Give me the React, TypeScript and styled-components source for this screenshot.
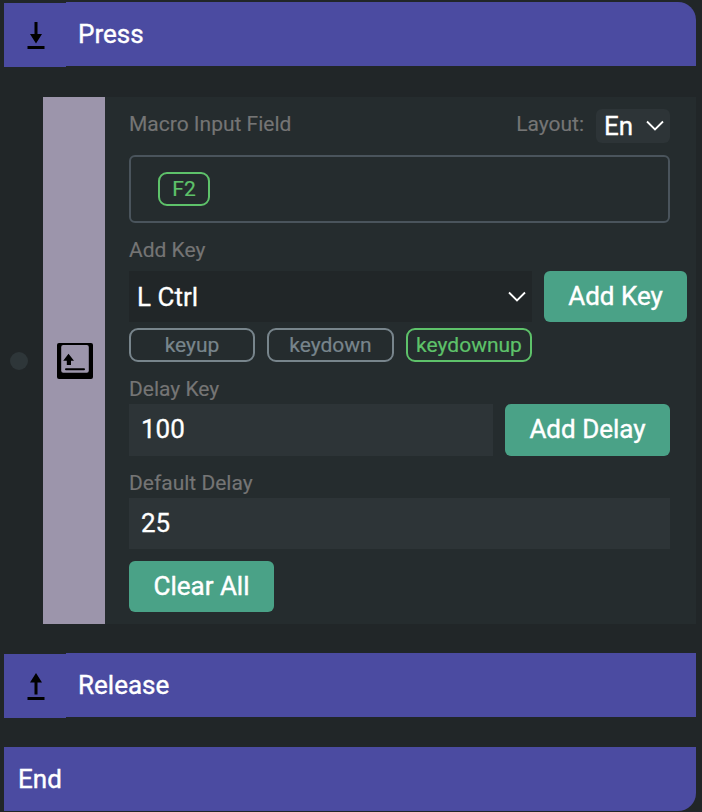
import React from 'react';
import styled, { createGlobalStyle } from 'styled-components';

const GlobalStyle = createGlobalStyle`
  *, *::before, *::after { box-sizing: border-box; }
  html, body { margin: 0; background: #212628; }
  body {
    font-family: Roboto, sans-serif;
    color: #fff;
    overflow: hidden;
  }
`;

const Page = styled.main`
  display: flex;
  flex-direction: column;
  height: 812px;
  padding: 2px 6px 1px 4px;
`;

const Section = styled.header`
  display: flex;
  height: 65px;
`;

const SectionIcon = styled.div`
  display: flex;
  align-items: center;
  justify-content: center;
  width: 62px;
  height: 64px;
  margin-top: 1px;
  padding-left: 2px;
  background: #4b4ba1;
`;

const SectionTitle = styled.h2<{ $pad: number; $radius?: string }>`
  flex: 1;
  height: 64px;
  margin: 0;
  padding-left: ${p => p.$pad}px;
  border-radius: ${p => p.$radius ?? '0'};
  background: #4b4ba1;
  font-size: 26px;
  font-weight: 400;
  -webkit-text-stroke: 0.4px #fff;
  line-height: 64px;
`;

const EndSection = styled(Section)`
  height: 64px;
  margin-top: 29px;
`;

const Action = styled.section`
  display: flex;
  height: 527px;
  margin: 30px 0 29px;
`;

const Connector = styled.div`
  display: flex;
  align-items: center;
  width: 39px;
  padding-left: 6px;
`;

const Dot = styled.span`
  width: 18px;
  height: 18px;
  border-radius: 50%;
  background: #2e3639;
`;

const Handle = styled.div`
  display: flex;
  align-items: center;
  justify-content: center;
  width: 62px;
  padding-left: 2px;
  background: #9c95ab;
`;

const Panel = styled.div`
  flex: 1;
  min-width: 0;
  padding: 12px 26px 12px 24px;
  background: #252c2e;
`;

const Top = styled.div`
  display: flex;
  align-items: flex-start;
  height: 34px;
  margin-bottom: 12px;
`;

const Label = styled.label<{ $height: number; $drop?: number }>`
  display: block;
  height: ${p => p.$height}px;
  padding-top: ${p => p.$drop ?? 0}px;
  color: #757575;
  font-size: 21px;
  line-height: ${p => p.$height - (p.$drop ?? 0)}px;
  -webkit-text-stroke: 0.15px currentColor;
  white-space: nowrap;
`;

const LayoutLabel = styled(Label)`
  margin: 0 12px 0 auto;
`;

const Select = styled.button<{ $compact?: boolean }>`
  display: flex;
  flex: ${p => (p.$compact ? '0 0 74px' : '0 0 403px')};
  align-items: center;
  justify-content: space-between;
  height: ${p => (p.$compact ? 34 : 51)}px;
  padding: 0 6px 0 8px;
  border: 0;
  border-radius: ${p => (p.$compact ? 6 : 0)}px;
  background: ${p => (p.$compact ? '#2d3437' : '#212628')};
  color: #fff;
  font: 400 26px Roboto, sans-serif;
  -webkit-text-stroke: 0.3px #fff;
`;

const MacroField = styled.div`
  display: flex;
  align-items: center;
  height: 68px;
  padding-left: 27px;
  border: 2px solid #4a545c;
  border-radius: 6px;
`;

const Chip = styled.button<{ $active?: boolean; $width: number }>`
  width: ${p => p.$width}px;
  height: 34px;
  padding: 0;
  border: 2px solid ${p => (p.$active ? '#5ec26a' : '#78858c')};
  border-radius: 9px;
  background: transparent;
  color: ${p => (p.$active ? '#5ec26a' : '#78858c')};
  font: 400 21px/30px Roboto, sans-serif;
  -webkit-text-stroke: 0.2px currentColor;
`;

const Row = styled.div`
  display: flex;
  gap: 12px;
`;

const ChipRow = styled(Row)`
  margin-top: 6px;
`;

const Input = styled.input<{ $height: number }>`
  flex: 1;
  width: 100%;
  min-width: 0;
  height: ${p => p.$height}px;
  padding: 0 12px 2px;
  border: 0;
  border-radius: 0;
  outline: 0;
  background: #2d3437;
  color: #fff;
  font: 400 26px Roboto, sans-serif;
  -webkit-text-stroke: 0.3px #fff;
`;

const Button = styled.button<{ $width: number; $height: number }>`
  flex: 0 0 ${p => p.$width}px;
  width: ${p => p.$width}px;
  height: ${p => p.$height}px;
  padding: 0 0 ${p => p.$height - 50}px;
  border: 0;
  border-radius: 6px;
  background: #4aa287;
  color: #fff;
  font: 400 26px Roboto, sans-serif;
  -webkit-text-stroke: 0.4px #fff;
`;

const ClearRow = styled(Row)`
  margin-top: 12px;
`;

const Chevron = () => (
  <svg width="18" height="12" viewBox="0 0 18 12" fill="none" stroke="#fff" strokeWidth="1.8">
    <path d="M1 1.5 9 9.5 17 1.5" />
  </svg>
);

const PressIcon = () => (
  <svg width="18" height="28" viewBox="0 0 18 28">
    <path d="M7.5 1h3v12H15L9 22.5 3 13h4.5zM0.5 25h17v3h-17z" />
  </svg>
);

const ReleaseIcon = () => (
  <svg width="18" height="28" viewBox="0 0 18 28">
    <path d="M9 1 15 10.5h-4.5v12h-3v-12H3zM0.5 25h17v3h-17z" />
  </svg>
);

const KeyIcon = () => (
  <svg width="36" height="36" viewBox="0 0 36 36">
    <rect width="36" height="36" rx="2" />
    <rect x="4.2" y="2" width="27.6" height="27.8" rx="2" fill="#9c95ab" />
    <path d="M11.5 10.7 17 17.8h-3V22H9.8v-4.2H6.2z" />
    <path d="M9 26.3h18" stroke="#000" strokeWidth="2" strokeLinecap="round" />
  </svg>
);

export default function App() {
  return (
    <>
      <GlobalStyle />
      <Page>
        <Section>
          <SectionIcon><PressIcon /></SectionIcon>
          <SectionTitle $pad={12} $radius="0 18px 0 0">Press</SectionTitle>
        </Section>
        <Action>
          <Connector><Dot /></Connector>
          <Handle><KeyIcon /></Handle>
          <Panel>
            <Top>
              <Label $height={30}>Macro Input Field</Label>
              <LayoutLabel $height={30}>Layout:</LayoutLabel>
              <Select $compact>En<Chevron /></Select>
            </Top>
            <MacroField><Chip $active $width={52}>F2</Chip></MacroField>
            <Label $height={48} $drop={6}>Add Key</Label>
            <Row>
              <Select>L Ctrl<Chevron /></Select>
              <Button $width={143} $height={51}>Add Key</Button>
            </Row>
            <ChipRow>
              <Chip $width={126}>keyup</Chip>
              <Chip $width={127}>keydown</Chip>
              <Chip $active $width={126}>keydownup</Chip>
            </ChipRow>
            <Label $height={42} $drop={12}>Delay Key</Label>
            <Row>
              <Input $height={52} defaultValue="100" />
              <Button $width={165} $height={52}>Add Delay</Button>
            </Row>
            <Label $height={42} $drop={12}>Default Delay</Label>
            <Row><Input $height={51} defaultValue="25" /></Row>
            <ClearRow><Button $width={145} $height={51}>Clear All</Button></ClearRow>
          </Panel>
        </Action>
        <Section>
          <SectionIcon><ReleaseIcon /></SectionIcon>
          <SectionTitle $pad={12}>Release</SectionTitle>
        </Section>
        <EndSection>
          <SectionTitle $pad={14} $radius="0 0 18px 0">End</SectionTitle>
        </EndSection>
      </Page>
    </>
  );
}
